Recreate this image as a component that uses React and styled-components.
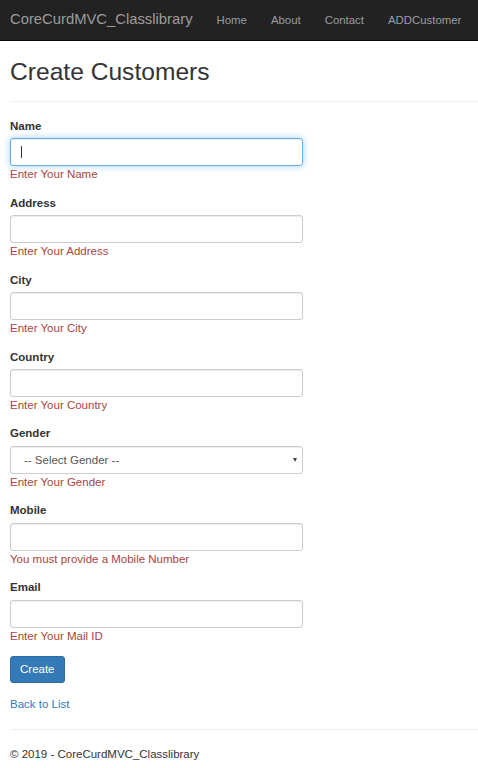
import React from 'react'
import styled, { createGlobalStyle } from 'styled-components'

const GlobalStyle = createGlobalStyle`
  *, *::before, *::after { box-sizing: border-box; }
  body {
    margin: 0;
    background: #fff;
    color: #333;
    font-family: "Liberation Sans", Arial, sans-serif;
    font-size: 11.5px;
    line-height: 1.42857;
  }
`

const fields = [
  { name: 'Name', error: 'Enter Your Name', focused: true },
  { name: 'Address', error: 'Enter Your Address' },
  { name: 'City', error: 'Enter Your City' },
  { name: 'Country', error: 'Enter Your Country' },
  { name: 'Gender', error: 'Enter Your Gender', select: true },
  { name: 'Mobile', error: 'You must provide a Mobile Number' },
  { name: 'Email', error: 'Enter Your Mail ID' },
]

const links = ['Home', 'About', 'Contact', 'ADDCustomer']

const App = () => {
  return (
    <>
      <GlobalStyle />
      <Navbar>
        <Brand href="#">CoreCurdMVC_Classlibrary</Brand>
        <NavList>
          {links.map(l => (
            <li key={l}><NavLink href="#">{l}</NavLink></li>
          ))}
        </NavList>
      </Navbar>

      <Container>
        <Title>Create Customers</Title>
        <Rule />

        <Form onSubmit={e => e.preventDefault()}>
          {fields.map(f => (
            <FormGroup key={f.name}>
              <Label>{f.name}</Label>
              <FieldWrap>
                {f.select ? (
                  <>
                    <Select defaultValue="">
                      <option value="">-- Select Gender --</option>
                      <option>Male</option>
                      <option>Female</option>
                    </Select>
                    <Arrow />
                  </>
                ) : (
                  <Control type="text" $focused={f.focused} />
                )}
                {f.focused && <Caret />}
              </FieldWrap>
              <FieldError>{f.error}</FieldError>
            </FormGroup>
          ))}
          <ButtonGroup>
            <SubmitButton type="submit">Create</SubmitButton>
          </ButtonGroup>
        </Form>

        <div>
          <BackLink href="#">Back to List</BackLink>
        </div>

        <Rule $top={17} />
        <Footer>© 2019 - CoreCurdMVC_Classlibrary</Footer>
      </Container>
    </>
  )
}

const Navbar = styled.header`
  display: flex;
  align-items: center;
  height: 41px;
  background: #222;
  border-bottom: 1px solid #080808;
`

const Brand = styled.a`
  padding: 0 12px 0 10px;
  color: #9d9d9d;
  font-size: 14.8px;
  text-decoration: none;
`

const NavList = styled.ul`
  display: flex;
  margin: 0;
  padding: 0;
  list-style: none;
`

const NavLink = styled.a`
  display: block;
  padding: 0 12px;
  color: #9d9d9d;
  font-size: 11.4px;
  text-decoration: none;
`

const Container = styled.main`
  padding: 0 0 0 10px;
`

const Title = styled.h2`
  margin: 17px 0 8px;
  font-size: 24.6px;
  font-weight: 500;
  line-height: 1.1;
  color: #333;
`

const Rule = styled.hr`
  margin: ${p => p.$top || 16}px 0 16px;
  border: 0;
  border-top: 1px solid #eee;
`

const Form = styled.form`
  width: 293px;
`

const FormGroup = styled.div`
  margin-bottom: 12px;
`

const Label = styled.label`
  display: block;
  margin-bottom: 4px;
  font-weight: bold;
`

const FieldWrap = styled.div`
  position: relative;
`

const Control = styled.input`
  display: block;
  width: 100%;
  height: 28px;
  padding: 5px 10px;
  font: inherit;
  color: #555;
  background: #fff;
  border: 1px solid ${p => (p.$focused ? '#66afe9' : '#ccc')};
  border-radius: 3px;
  outline: 0;
  box-shadow: ${p =>
    p.$focused
      ? 'inset 0 1px 1px rgba(0,0,0,.075), 0 0 7px rgba(102,175,233,.6)'
      : 'inset 0 1px 1px rgba(0,0,0,.075)'};
`

const Select = styled.select`
  display: block;
  width: 100%;
  height: 28px;
  padding: 0 20px 0 13px;
  font: inherit;
  color: #555;
  background: #fff;
  border: 1px solid #ccc;
  border-radius: 3px;
  appearance: none;
  box-shadow: inset 0 1px 1px rgba(0,0,0,.075);
`

const Arrow = styled.span`
  position: absolute;
  right: 6px;
  top: 12px;
  border-left: 2.5px solid transparent;
  border-right: 2.5px solid transparent;
  border-top: 4px solid #444;
  pointer-events: none;
`

const Caret = styled.span`
  position: absolute;
  left: 11px;
  top: 8px;
  width: 1px;
  height: 12px;
  background: #333;
`

const FieldError = styled.span`
  display: block;
  color: #a94442;
`

const ButtonGroup = styled.div`
  margin: 1px 0 13px;
`

const SubmitButton = styled.button`
  height: 27px;
  padding: 0 9px;
  font: inherit;
  color: #fff;
  background: #337ab7;
  border: 1px solid #2e6da4;
  border-radius: 3px;
  cursor: pointer;
`

const BackLink = styled.a`
  color: #337ab7;
  text-decoration: none;
`

const Footer = styled.footer`
  padding-bottom: 6px;
`

export default App
